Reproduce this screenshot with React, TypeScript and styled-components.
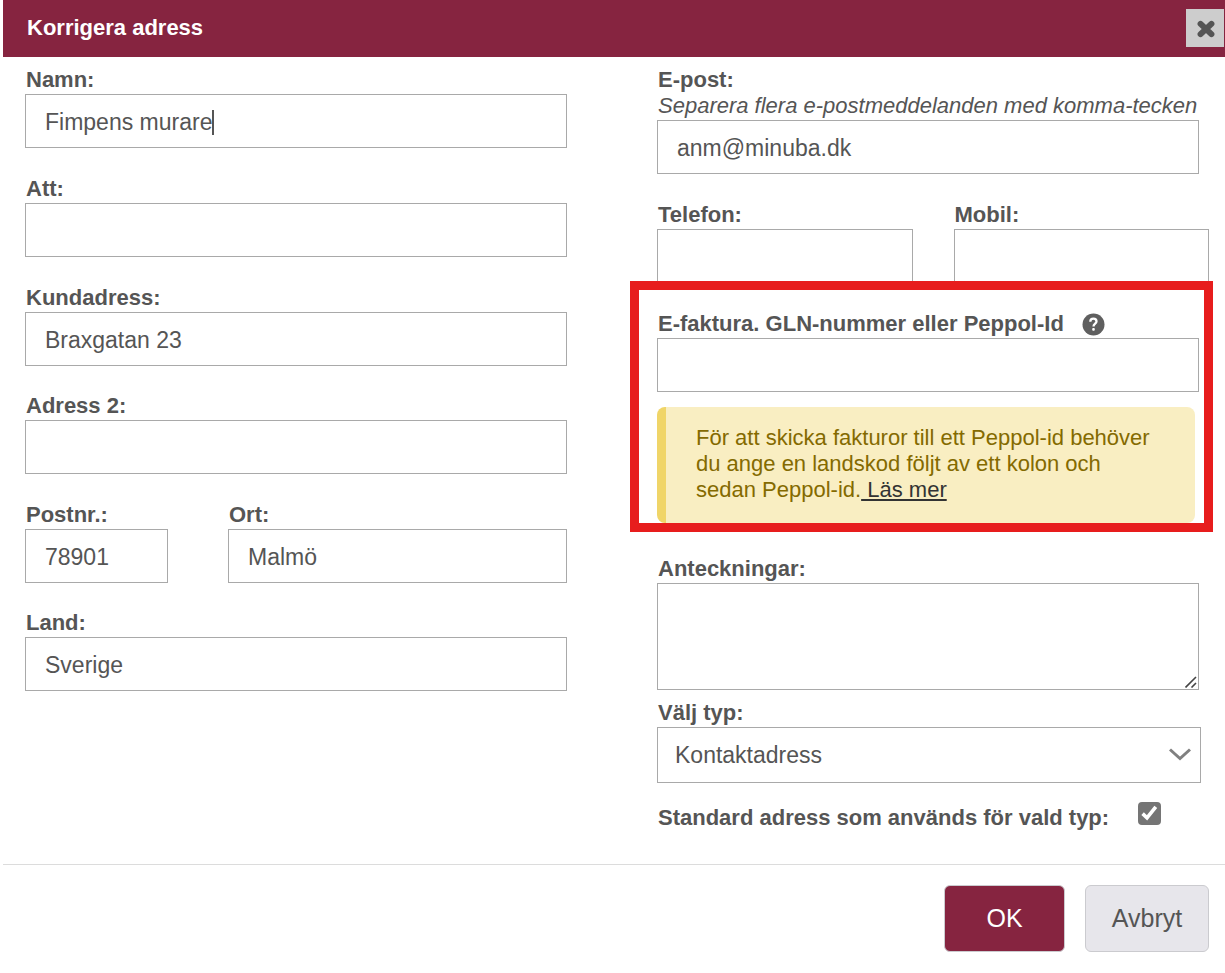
import React, { useState } from "react";
import styled, { createGlobalStyle, css } from "styled-components";

const GlobalStyle = createGlobalStyle`
  *, *::before, *::after { box-sizing: border-box; }
  body {
    margin: 0;
    background: #fff;
    color: #555;
    font: 22px/26px "Liberation Sans", Arial, sans-serif;
  }
`;

const Dialog = styled.div`
  margin-left: 3px;
`;

const Header = styled.header`
  display: flex;
  align-items: center;
  justify-content: space-between;
  height: 57px;
  padding: 0 1px 2px 24px;
  background: #862440;
  color: #fff;
`;

const Title = styled.h1`
  margin: 0;
  font-size: 22px;
  line-height: 26px;
`;

const CloseButton = styled.button`
  display: flex;
  align-items: center;
  justify-content: center;
  width: 38px;
  height: 38px;
  padding: 2px 0 0 2px;
  border: 0;
  background: #cdcdcd;
  color: #555;
  cursor: pointer;
`;

const Form = styled.form`
  margin: 0;
`;

const Columns = styled.div`
  display: grid;
  grid-template-columns: minmax(0, 1fr) minmax(0, 1fr);
  column-gap: 80px;
  padding: 10px 16px 33px 22px;
`;

const Column = styled.div`
  display: flex;
  flex-direction: column;
  gap: 28px;
`;

const LeftColumn = styled(Column)`
  gap: 27px;
  padding-right: 10px;
`;

const Row = styled.div<{ $columns: string; $gap: number }>`
  display: grid;
  grid-template-columns: ${(p) => p.$columns};
  column-gap: ${(p) => p.$gap}px;
`;

const Field = styled.div<{ $inset?: number }>`
  display: flex;
  flex-direction: column;
  margin-right: ${(p) => p.$inset ?? 0}px;
`;

const Label = styled.label`
  padding-left: 1px;
  font-weight: bold;
`;

const Hint = styled.em`
  padding-left: 1px;
  white-space: nowrap;
`;

const control = css`
  display: block;
  width: 100%;
  margin: 0;
  border: 1px solid #a9a9a9;
  border-radius: 0;
  background: #fff;
  color: #555;
  font: 23px/26px "Liberation Sans", Arial, sans-serif;
  outline: 0;
`;

const Input = styled.input`
  ${control}
  height: 54px;
  padding: 2px 19px 0;
`;

const InputWrap = styled.div`
  position: relative;
  margin-top: 1px;
`;

const Caret = styled.span`
  position: absolute;
  top: 16px;
  left: 187px;
  width: 2px;
  height: 25px;
  background: #555;
`;

const TextArea = styled.textarea`
  ${control}
  height: 107px;
  padding: 14px 19px;

  &::-webkit-resizer { background: transparent; }
`;

const Grip = styled.svg`
  position: absolute;
  right: 2px;
  bottom: 2px;
  pointer-events: none;
`;

const Select = styled.select`
  ${control}
  height: 56px;
  padding: 0 40px 0 17px;
  appearance: none;
`;

const Chevron = styled.svg`
  position: absolute;
  top: 21px;
  right: 10px;
  pointer-events: none;
`;

const Highlight = styled.section`
  position: relative;
`;

const HighlightFrame = styled.div`
  position: absolute;
  inset: -30px -4px -9px -27px;
  border: 9px solid #e71d1d;
  pointer-events: none;
`;

const LabelLine = styled.div`
  display: flex;
  align-items: center;
  gap: 18px;
  height: 26px;
`;

const Notice = styled.p`
  margin: 15px 14px 0 0;
  padding: 18px 30px 20px;
  border-left: 9px solid #f0d568;
  border-radius: 8px;
  background: #f9eec2;
  color: #846a00;
`;

const NoticeLink = styled.a`
  color: #333;
  text-decoration: underline;
  white-space: pre;
`;

const Details = styled.div`
  display: flex;
  flex-direction: column;
  gap: 10px;
  padding-top: 5px;
`;

const CheckLine = styled.div`
  display: flex;
  gap: 29px;
  padding-top: 9px;
`;

const CheckBoxWrap = styled.span`
  position: relative;
  width: 23px;
  height: 23px;
`;

const CheckBox = styled.input`
  display: block;
  width: 23px;
  height: 23px;
  margin: 0;
  border: 2px solid #757575;
  border-radius: 4px;
  appearance: none;

  &:checked { background: #757575; }
`;

const Tick = styled.svg`
  position: absolute;
  inset: 0;
  pointer-events: none;
`;

const CheckLabel = styled(Label)`
  padding-top: 3px;
`;

const Footer = styled.footer`
  display: flex;
  justify-content: flex-end;
  gap: 20px;
  padding: 20px 16px;
  border-top: 1px solid #dcdcdc;
`;

const Button = styled.button<{ $primary?: boolean }>`
  width: ${(p) => (p.$primary ? 121 : 124)}px;
  height: 67px;
  padding: 0 0 2px;
  border: 1px solid #cbcbcf;
  border-radius: 6px;
  background: ${(p) => (p.$primary ? "#862440" : "#e7e6eb")};
  color: ${(p) => (p.$primary ? "#fff" : "#555")};
  font: 25px/30px "Liberation Sans", Arial, sans-serif;
  cursor: pointer;
`;

interface TextFieldProps {
  id: string;
  label: string;
  value?: string;
  hint?: string;
  inset?: number;
  active?: boolean;
}

function TextField({ id, label, value = "", hint, inset, active }: TextFieldProps) {
  return (
    <Field $inset={inset}>
      <Label htmlFor={id}>{label}</Label>
      {hint && <Hint id={`${id}-hint`}>{hint}</Hint>}
      <InputWrap>
        <Input id={id} defaultValue={value} aria-describedby={hint ? `${id}-hint` : undefined} />
        {active && <Caret />}
      </InputWrap>
    </Field>
  );
}

function HelpIcon() {
  return (
    <svg width="23" height="23" viewBox="0 0 23 23" fill="none" aria-hidden="true">
      <circle cx="11.5" cy="11.5" r="11" fill="#5f5f5f" />
      <path
        d="M8.3 8.7C8.3 6.7 9.7 5.7 11.4 5.7S14.5 6.7 14.5 8.4C14.5 10.6 11.5 10.7 11.5 13.6"
        stroke="#fff"
        strokeWidth="2.3"
      />
      <rect x="10.2" y="15.1" width="2.6" height="2.6" rx="1" fill="#fff" />
    </svg>
  );
}

export default function App() {
  const [standard, setStandard] = useState(true);

  return (
    <>
      <GlobalStyle />
      <Dialog role="dialog" aria-labelledby="title">
        <Header>
          <Title id="title">Korrigera adress</Title>
          <CloseButton type="button" aria-label="Stäng">
            <svg width="20" height="20" viewBox="0 0 20 20" fill="none" stroke="currentColor" strokeWidth="6">
              <path d="M4.6 4.9 15.4 15.1M15.4 4.9 4.6 15.1" strokeLinecap="round" />
              <path d="M10 6.4 13.6 10 10 13.6 6.4 10Z" fill="currentColor" stroke="none" />
            </svg>
          </CloseButton>
        </Header>
        <Form onSubmit={(e) => e.preventDefault()}>
          <Columns>
            <LeftColumn>
              <Column>
                <TextField id="name" label="Namn:" value="Fimpens murare" active />
                <TextField id="att" label="Att:" />
                <TextField id="address" label="Kundadress:" value="Braxgatan 23" />
              </Column>
              <Column>
                <TextField id="address2" label="Adress 2:" />
                <Row $columns="143px minmax(0, 1fr)" $gap={60}>
                  <TextField id="zip" label="Postnr.:" value="78901" />
                  <TextField id="city" label="Ort:" value="Malmö" />
                </Row>
              </Column>
              <TextField id="country" label="Land:" value="Sverige" />
            </LeftColumn>
            <Column>
              <TextField
                id="email"
                label="E-post:"
                hint="Separera flera e-postmeddelanden med komma-tecken"
                value="anm@minuba.dk"
                inset={10}
              />
              <Row $columns="minmax(0, 1fr) minmax(0, 1fr)" $gap={41}>
                <TextField id="phone" label="Telefon:" />
                <TextField id="mobile" label="Mobil:" />
              </Row>
              <Highlight>
                <Field $inset={10}>
                  <LabelLine>
                    <Label htmlFor="gln">E-faktura. GLN-nummer eller Peppol-Id</Label>
                    <HelpIcon />
                  </LabelLine>
                  <InputWrap>
                    <Input id="gln" />
                  </InputWrap>
                </Field>
                <Notice>
                  För att skicka fakturor till ett Peppol-id behöver du ange en landskod följt av ett kolon och
                  sedan Peppol-id.<NoticeLink href="#peppol"> Läs mer</NoticeLink>
                </Notice>
                <HighlightFrame />
              </Highlight>
              <Details>
                <Field $inset={10}>
                  <Label htmlFor="notes">Anteckningar:</Label>
                  <InputWrap>
                    <TextArea id="notes" />
                    <Grip width="12" height="12" viewBox="0 0 12 12" fill="none" stroke="#444" strokeWidth="1.6">
                      <path d="M.5 11.5 11 1M6.5 11.5 11 7" />
                    </Grip>
                  </InputWrap>
                </Field>
                <Field $inset={8}>
                  <Label htmlFor="type">Välj typ:</Label>
                  <InputWrap>
                    <Select id="type" defaultValue="contact">
                      <option value="contact">Kontaktadress</option>
                    </Select>
                    <Chevron width="22" height="14" viewBox="0 0 22 14" fill="none" stroke="#808080" strokeWidth="3">
                      <path d="M1 1.5 11 10.5 21 1.5" />
                    </Chevron>
                  </InputWrap>
                </Field>
                <CheckLine>
                  <CheckLabel htmlFor="standard">Standard adress som används för vald typ:</CheckLabel>
                  <CheckBoxWrap>
                    <CheckBox
                      id="standard"
                      type="checkbox"
                      checked={standard}
                      onChange={(e) => setStandard(e.target.checked)}
                    />
                    {standard && (
                      <Tick width="23" height="23" viewBox="0 0 23 23" fill="none" stroke="#fff" strokeWidth="3.6">
                        <path d="M4.6 11.6 9 15.8 17.8 4.8" />
                      </Tick>
                    )}
                  </CheckBoxWrap>
                </CheckLine>
              </Details>
            </Column>
          </Columns>
          <Footer>
            <Button type="submit" $primary>OK</Button>
            <Button type="button">Avbryt</Button>
          </Footer>
        </Form>
      </Dialog>
    </>
  );
}
